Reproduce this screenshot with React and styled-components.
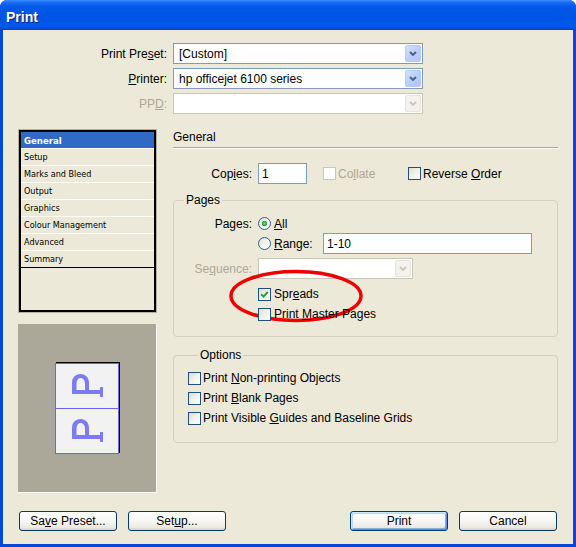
import React from "react";
import styled, { createGlobalStyle } from "styled-components";

const GlobalStyle = createGlobalStyle`
  html, body {
    margin: 0;
    padding: 0;
    background: #ffffff;
  }
  body {
    font-family: "Liberation Sans", Arial, sans-serif;
    font-size: 12px;
    color: #000;
  }
`;

const Window = styled.div`
  width: 576px;
  height: 547px;
  box-sizing: border-box;
  display: flex;
  flex-direction: column;
  background: #0846d8;
  border-radius: 7px 7px 0 0;
  overflow: hidden;
`;

const TitleBar = styled.div`
  height: 30px;
  flex: none;
  box-sizing: border-box;
  padding: 9px 0 0 6px;
  background: linear-gradient(
    180deg,
    #3d8dff 0%,
    #1a6cf5 8%,
    #0058e7 22%,
    #0054e3 60%,
    #0059ea 84%,
    #0050e0 93%,
    #003ecb 100%
  );
  color: #fff;
  font-weight: bold;
  font-size: 14px;
  line-height: 16px;
  text-shadow: 1px 1px 0 #0a1e84;
`;

const Body = styled.div`
  flex: 1;
  margin: 0 3px 3px;
  padding: 13px 15px 13px;
  background: #ece9d8;
  display: flex;
  flex-direction: column;
`;

const PresetGrid = styled.div`
  display: grid;
  grid-template-columns: 149px 250px;
  grid-auto-rows: 21px;
  column-gap: 6px;
  row-gap: 4px;
  align-items: center;
`;

const FormLabel = styled.span`
  text-align: right;
  color: ${(p) => (p.$disabled ? "#aca899" : "#000")};
`;

const Combo = styled.div`
  height: 21px;
  width: ${(p) => (p.$w ? `${p.$w}px` : "auto")};
  box-sizing: border-box;
  border: 1px solid ${(p) => (p.$disabled ? "#c9c7ba" : "#7f9db9")};
  background: #fff;
  display: flex;
  align-items: center;
  padding-left: 5px;
`;

const ComboValue = styled.span`
  flex: 1;
  white-space: nowrap;
`;

const ComboButton = styled.div`
  width: 16px;
  height: 17px;
  margin: 1px;
  box-sizing: border-box;
  border: 1px solid ${(p) => (p.$disabled ? "#e6e4dc" : "#b6cbf7")};
  border-radius: 2px;
  background: ${(p) =>
    p.$disabled
      ? "#f3f2ec"
      : "linear-gradient(135deg, #d4e0fc 0%, #bccffa 50%, #b0c5f6 100%)"};
  display: flex;
  align-items: center;
  justify-content: center;
`;

const Chevron = ({ color }) => (
  <svg width="8" height="5" viewBox="0 0 8 5">
    <polyline points="1,1 4,4 7,1" fill="none" stroke={color} strokeWidth="1.9" />
  </svg>
);

const Select = ({ value, disabled, width }) => (
  <Combo $disabled={disabled} $w={width}>
    <ComboValue>{value}</ComboValue>
    <ComboButton $disabled={disabled}>
      <Chevron color={disabled ? "#c9c7ba" : "#4d6185"} />
    </ComboButton>
  </Combo>
);

const MainRow = styled.div`
  display: flex;
  gap: 16px;
  margin-top: 15px;
`;

const SideColumn = styled.div`
  width: 139px;
  flex: none;
  display: flex;
  flex-direction: column;
`;

const NavList = styled.ul`
  list-style: none;
  margin: 1px;
  padding: 0;
  height: 182px;
  box-sizing: border-box;
  border: 2px solid #000;
  box-shadow: 0 0 0 1px #b4b1a2;
  background: #ece9d8;
`;

const NavItem = styled.li`
  height: 17px;
  box-sizing: border-box;
  padding-left: 3px;
  display: flex;
  align-items: center;
  border-bottom: 1px solid ${(p) => (p.$last ? "#000" : "#fff")};
  background: ${(p) => (p.$active ? "#316ac5" : "transparent")};
  color: ${(p) => (p.$active ? "#fff" : "#000")};
  font-family: "DejaVu Sans Condensed", "Liberation Sans", sans-serif;
  font-size: ${(p) => (p.$active ? "9.5px" : "9px")};
  font-weight: ${(p) => (p.$active ? "bold" : "normal")};
  white-space: nowrap;
`;

const Preview = styled.div`
  margin-top: 11px;
  height: 169px;
  box-sizing: border-box;
  background: #aca899;
  border-right: 1px solid #fff;
  border-bottom: 1px solid #fff;
  display: flex;
  align-items: center;
  justify-content: center;
`;

const PageSheet = styled.div`
  width: 64px;
  box-sizing: border-box;
  border: 1px solid #6767ee;
  box-shadow: 1px -1px 0 #000;
  background: #f2f2f2;
  display: flex;
  flex-direction: column;
`;

const PageCell = styled.div`
  height: ${(p) => (p.$first ? "44px" : "45px")};
  box-sizing: border-box;
  border-top: ${(p) => (p.$first ? "none" : "1px solid #6767ee")};
  display: flex;
  align-items: ${(p) => (p.$first ? "flex-start" : "flex-end")};
`;

const PageGlyph = () => (
  <svg width="62" height="44" viewBox="0 0 62 44">
    <g fill="#7b7bf5">
      <rect x="16" y="26" width="29" height="4" />
      <rect x="44" y="23" width="3" height="10" />
      <path
        fillRule="evenodd"
        d="M16 28 L16 19 C16 13.5 19.5 10 24.5 10 C29.5 10 33 13.5 33 19 L33 28 Z
           M20.5 26 L20.5 19.5 C20.5 16 22.3 14 24.5 14 C26.7 14 29 16 29 19.5 L29 26 Z"
      />
    </g>
  </svg>
);

const ContentColumn = styled.div`
  flex: 1;
  min-width: 0;
  display: flex;
  flex-direction: column;
`;

const SectionTitle = styled.div`
  padding: 2px 0 3px;
  line-height: 13px;
  border-bottom: 1px solid #aca899;
  box-shadow: 0 1px 0 #fff;
`;

const Row = styled.div`
  position: relative;
  display: flex;
  align-items: center;
  height: ${(p) => p.$h || 20}px;
  margin-top: ${(p) => p.$mt || 0}px;
`;

const RowLabel = styled.span`
  width: ${(p) => p.$w}px;
  margin-right: 6px;
  flex: none;
  text-align: right;
  color: ${(p) => (p.$disabled ? "#aca899" : "#000")};
`;

const TextField = styled.div`
  width: ${(p) => p.$w}px;
  height: 21px;
  box-sizing: border-box;
  border: 1px solid #7f9db9;
  background: #fff;
  padding-left: 3px;
  display: flex;
  align-items: center;
`;

const Option = styled.span`
  display: flex;
  align-items: center;
  flex: none;
  width: ${(p) => (p.$w ? `${p.$w}px` : "auto")};
  color: ${(p) => (p.$disabled ? "#aca899" : "#000")};
`;

const OptionText = styled.span`
  margin-left: ${(p) => p.$gap || 2}px;
  white-space: nowrap;
`;

const Box = styled.span`
  width: 13px;
  height: 13px;
  flex: none;
  box-sizing: border-box;
  border: 1px solid ${(p) => (p.$disabled ? "#cac8bb" : "#1c5180")};
  background: ${(p) =>
    p.$disabled
      ? "#fff"
      : "linear-gradient(135deg, #dcdcd7 0%, #efefeb 45%, #ffffff 100%)"};
  display: flex;
  align-items: center;
  justify-content: center;
`;

const RadioMark = styled.span`
  width: 13px;
  height: 13px;
  flex: none;
  box-sizing: border-box;
  border-radius: 50%;
  border: 1px solid #2f5f8c;
  background: ${(p) =>
    p.$checked
      ? "radial-gradient(circle at 50% 50%, #7ee07e 0, #2fb32f 1.8px, #21a121 2.4px, transparent 3px), linear-gradient(135deg, #dcdcd7 0%, #f3f3f0 50%, #ffffff 100%)"
      : "linear-gradient(135deg, #dcdcd7 0%, #f3f3f0 50%, #ffffff 100%)"};
`;

const CheckBox = ({ checked, disabled }) => (
  <Box $disabled={disabled}>
    {checked && (
      <svg width="9" height="9" viewBox="0 0 9 9">
        <path d="M1.2 4.2 L3.6 6.6 L7.8 1.8" fill="none" stroke="#21a121" strokeWidth="2" />
      </svg>
    )}
  </Box>
);

const Group = styled.fieldset`
  margin: ${(p) => p.$mt}px 0 0;
  padding: ${(p) => p.$pad};
  min-width: 0;
  border: 1px solid #d0d0bf;
  border-radius: 4px;
`;

const GroupTitle = styled.legend`
  margin-left: 10px;
  padding: 0 2px;
  line-height: 14px;
`;

const Highlight = styled.svg`
  position: absolute;
  left: 54px;
  top: -16px;
  pointer-events: none;
`;

const Footer = styled.div`
  margin-top: 18px;
  padding: 0 1px;
  display: flex;
  justify-content: space-between;
`;

const ButtonGroup = styled.div`
  display: flex;
  gap: 11px;
`;

const Button = styled.button`
  width: 98px;
  height: 20px;
  padding: 0;
  border: 1px solid #003c74;
  border-radius: 3px;
  background: linear-gradient(180deg, #ffffff 0%, #f5f5f1 55%, #ebeae3 85%, #d6d0c5 100%);
  font-family: "Liberation Sans", Arial, sans-serif;
  font-size: 12px;
  color: #000;
  box-shadow: ${(p) =>
    p.$default
      ? "inset 1px 1px 0 #cee7ff, inset -1px -1px 0 #6982ee, inset 2px 2px 0 #bcd4f6, inset -2px -2px 0 #89ade4"
      : "none"};
`;

const navItems = [
  "General",
  "Setup",
  "Marks and Bleed",
  "Output",
  "Graphics",
  "Colour Management",
  "Advanced",
  "Summary",
];

export default function App() {
  return (
    <>
      <GlobalStyle />
      <Window>
        <TitleBar>Print</TitleBar>
        <Body>
          <PresetGrid>
            <FormLabel>
              Print Pre<u>s</u>et:
            </FormLabel>
            <Select value="[Custom]" />
            <FormLabel>
              <u>P</u>rinter:
            </FormLabel>
            <Select value="hp officejet 6100 series" />
            <FormLabel $disabled>
              PP<u>D</u>:
            </FormLabel>
            <Select value="" disabled />
          </PresetGrid>

          <MainRow>
            <SideColumn>
              <NavList>
                {navItems.map((item, i) => (
                  <NavItem key={item} $active={i === 0} $last={i === navItems.length - 1}>
                    {item}
                  </NavItem>
                ))}
              </NavList>
              <Preview>
                <PageSheet>
                  <PageCell $first>
                    <PageGlyph />
                  </PageCell>
                  <PageCell>
                    <PageGlyph />
                  </PageCell>
                </PageSheet>
              </Preview>
            </SideColumn>

            <ContentColumn>
              <SectionTitle>General</SectionTitle>

              <Row $h={21} $mt={15}>
                <RowLabel $w={79}>
                  Cop<u>i</u>es:
                </RowLabel>
                <TextField $w={49}>1</TextField>
                <Option $w={85} $disabled style={{ marginLeft: 16 }}>
                  <CheckBox disabled />
                  <OptionText>
                    Co<u>l</u>late
                  </OptionText>
                </Option>
                <Option>
                  <CheckBox />
                  <OptionText>
                    Reverse <u>O</u>rder
                  </OptionText>
                </Option>
              </Row>

              <Group $mt={9} $pad="7px 0 12px 0">
                <GroupTitle>Pages</GroupTitle>
                <Row $h={19}>
                  <RowLabel $w={78}>Pages:</RowLabel>
                  <Option>
                    <RadioMark $checked />
                    <OptionText $gap={3}>
                      <u>A</u>ll
                    </OptionText>
                  </Option>
                </Row>
                <Row $h={21}>
                  <RowLabel $w={78} />
                  <Option $w={65}>
                    <RadioMark />
                    <OptionText $gap={3}>
                      <u>R</u>ange:
                    </OptionText>
                  </Option>
                  <TextField $w={209}>1-10</TextField>
                </Row>
                <Row $h={21} $mt={4}>
                  <RowLabel $w={78} $disabled>
                    Se<u>q</u>uence:
                  </RowLabel>
                  <Select value="" disabled width={155} />
                </Row>
                <Row $mt={5}>
                  <RowLabel $w={78} />
                  <Option>
                    <CheckBox checked />
                    <OptionText $gap={3}>
                      Spr<u>e</u>ads
                    </OptionText>
                  </Option>
                  <Highlight width="136" height="56" viewBox="0 0 136 56">
                    <ellipse
                      cx="68"
                      cy="28"
                      rx="65"
                      ry="24.5"
                      fill="none"
                      stroke="#ee0000"
                      strokeWidth="3.5"
                    />
                  </Highlight>
                </Row>
                <Row>
                  <RowLabel $w={78} />
                  <Option>
                    <CheckBox />
                    <OptionText $gap={3}>
                      Print <u>M</u>aster Pages
                    </OptionText>
                  </Option>
                </Row>
              </Group>

              <Group $mt={11} $pad="6px 0 14px 14px">
                <GroupTitle>Options</GroupTitle>
                <Row>
                  <Option>
                    <CheckBox />
                    <OptionText>
                      Print <u>N</u>on-printing Objects
                    </OptionText>
                  </Option>
                </Row>
                <Row>
                  <Option>
                    <CheckBox />
                    <OptionText>
                      Print <u>B</u>lank Pages
                    </OptionText>
                  </Option>
                </Row>
                <Row>
                  <Option>
                    <CheckBox />
                    <OptionText>
                      Print Visible <u>G</u>uides and Baseline Grids
                    </OptionText>
                  </Option>
                </Row>
              </Group>
            </ContentColumn>
          </MainRow>

          <Footer>
            <ButtonGroup>
              <Button>
                Sa<u>v</u>e Preset...
              </Button>
              <Button>
                Set<u>u</u>p...
              </Button>
            </ButtonGroup>
            <ButtonGroup>
              <Button $default>Print</Button>
              <Button>Cancel</Button>
            </ButtonGroup>
          </Footer>
        </Body>
      </Window>
    </>
  );
}
